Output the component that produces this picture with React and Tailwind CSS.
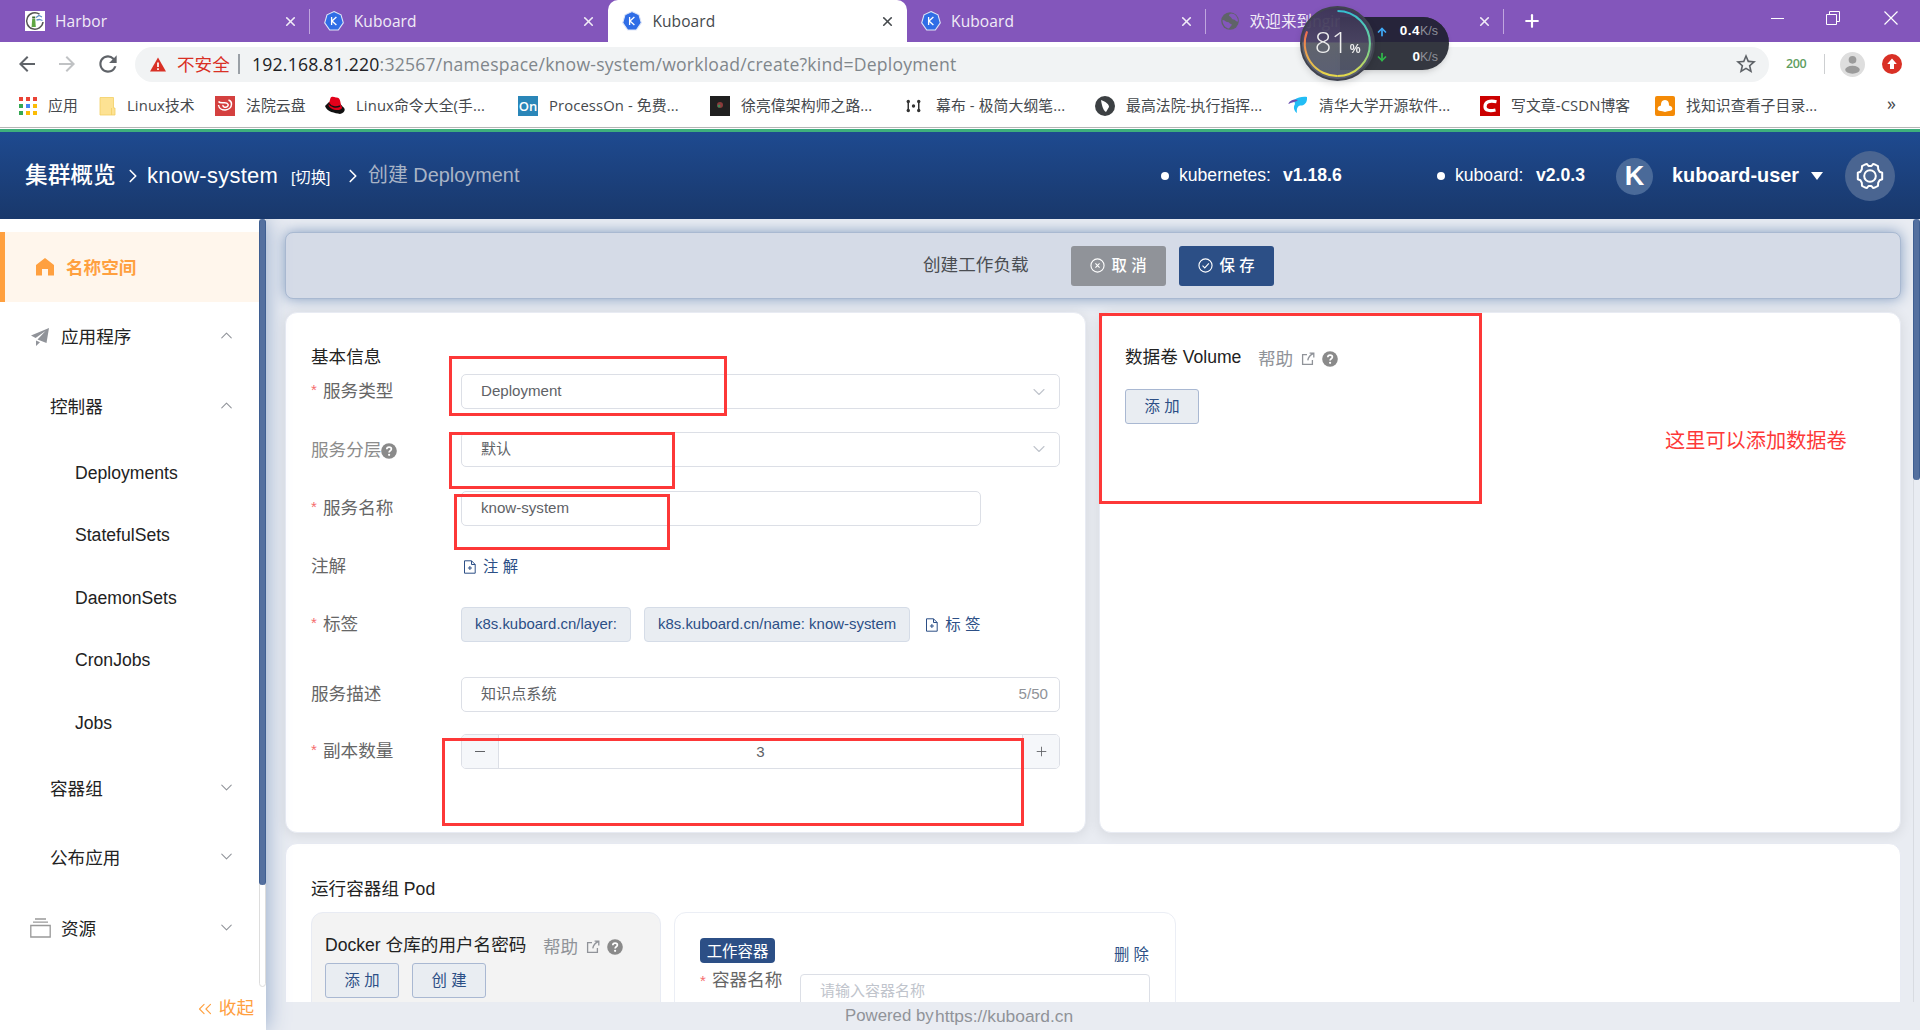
import { X, Plus, ChevronDown, ChevronUp, ChevronRight, ChevronsLeft, ArrowUp, ArrowDown } from 'lucide-react';
import { MdArrowBack, MdArrowForward, MdRefresh, MdStarBorder } from 'react-icons/md';

/* ---------- icons ---------- */

function KuboardIcon() {
    return (
        <svg viewBox="0 0 20 20" className="w-5 h-5 shrink-0">
            <path d="M10 .6 17 3.800 19.300 11.800 14.300 19H5.700L.7 11.800 3 3.800Z" fill="#2f6de6" stroke="#dfe6f7" strokeWidth="1.100" />
            <path d="M7.600 6v8M12.400 6 8 10l4.400 4" fill="none" stroke="#fff" strokeWidth="1.300" />
        </svg>
    );
}

function HarborIcon() {
    return (
        <svg viewBox="0 0 20 20" className="w-5 h-5 shrink-0">
            <rect width="20" height="20" fill="#fff" />
            <path d="M14.500 3.200A8.200 8.200 0 1 0 18 11" fill="none" stroke="#555" strokeWidth="1.500" />
            <path d="M7.200 8h3l.6 8H6.600Z" fill="#5fa743" />
            <path d="M7.200 5.500h3v2h-3Z" fill="#3d6b2e" />
            <path d="M11 6.500l3-2 3 1.500M11.500 9l3-.5 3 1" fill="none" stroke="#5d8fc4" strokeWidth="1.300" />
        </svg>
    );
}

function GlobeIcon() {
    return (
        <svg viewBox="0 0 20 20" className="w-5 h-5 shrink-0">
            <circle cx="10" cy="10" r="8.800" fill="#5f6368" />
            <path d="M2.500 9c2.500 0 3 2 5 2s1.500 1.500 3.500 2-.5 2.500-2 4.500C5 17 2.500 13 2.500 9ZM11 2.500c-2 1-3 2-1 3s1.500 3 3.500 3 2 2.500 4.500 2C18 6 15 2.500 11 2.500Z" fill="#8356bb" />
        </svg>
    );
}

function HelpIcon() {
    return (
        <svg viewBox="0 0 16 16" className="w-4 h-4 shrink-0">
            <circle cx="8" cy="8" r="7.800" fill="#8a8a8a" />
            <path d="M5.800 6.300c0-3 4.600-2.800 4.600-.2 0 1.600-2.300 1.700-2.300 3.300" fill="none" stroke="#fff" strokeWidth="1.700" />
            <circle cx="8.100" cy="11.800" r="1.100" fill="#fff" />
        </svg>
    );
}

function ExternalIcon() {
    return (
        <svg viewBox="0 0 14 14" className="w-3.5 h-3.5 shrink-0" fill="none" stroke="#909399" strokeWidth="1.300">
            <path d="M6 2.600H1.600v9.800h9.800V8M8.600 1.200h4.200v4.200M12.600 1.400C9 3 7.300 5 6.800 8.300" />
        </svg>
    );
}

function DocAddIcon() {
    return (
        <svg viewBox="0 0 14 14" className="w-3.5 h-3.5 shrink-0" fill="none" stroke="#2c4f86" strokeWidth="1">
            <path d="M1.500.8h7l3.700 3.700v8.700H1.500ZM8.500.8v3.700h3.700M6.900 6v4M4.900 8h4" />
        </svg>
    );
}

function GearIcon() {
    return (
        <svg viewBox="0 0 28 28" className="w-7 h-7" fill="none" stroke="#fff" strokeWidth="2" strokeLinejoin="round">
            <path d="M9 2.500 11 2l1.500 2h3L17 2l2 .5 3 1.700.2 3 1.400 2.500 2.600 1v6.600l-2.600 1-1.400 2.500-.2 3-3 1.700-2 .5-1.500-2h-3L11 26l-2-.5-3-1.700-.2-3-1.400-2.500-2.600-1v-6.600l2.600-1 1.400-2.500.2-3Z" />
            <circle cx="14" cy="14" r="5.800" />
        </svg>
    );
}

/* ---------- browser chrome ---------- */

const tabs = [
    { title: 'Harbor', icon: <HarborIcon />, divider: true },
    { title: 'Kuboard', icon: <KuboardIcon /> },
    { title: 'Kuboard', icon: <KuboardIcon />, active: true },
    { title: 'Kuboard', icon: <KuboardIcon />, divider: true },
    { title: '欢迎来到nginx!', icon: <GlobeIcon />, divider: true },
];

function TabBar() {
    return (
        <div className="flex h-[42px] bg-[#8356bb] pl-[11px]">
            {tabs.map((tab, i) => (
                <div
                    key={i}
                    className={`relative flex items-center w-[298.700px] pl-[14px] pr-3 text-[15.500px] ${tab.active ? 'bg-white text-[#45494d] rounded-t-[10px]' : 'text-[#f1ecf7]'}`}
                >
                    {tab.icon}
                    <span className="ml-2.5 mt-0.5 flex-1 tracking-[0.100px]">{tab.title}</span>
                    <X className="w-[15px] h-[15px]" strokeWidth={2.600} />
                    {tab.divider && <div className="absolute right-0 top-[9px] w-px h-[25px] bg-[#c0a6de]"></div>}
                </div>
            ))}
            <div className="flex items-center pl-[18px] text-white"><Plus className="w-5 h-5" strokeWidth={2.600} /></div>
            <div className="ml-auto flex items-center gap-[42px] pr-[22px] pb-1.5 text-white">
                <div className="w-[13px] h-px bg-white"></div>
                <svg viewBox="0 0 14 14" className="mr-0.5 w-3.5 h-3.5" fill="none" stroke="#fff"><path d="M.5 3.500h10v10H.5ZM3.500 3.500v-3h10v10h-3" /></svg>
                <svg viewBox="0 0 14 14" className="w-3.5 h-3.5" fill="none" stroke="#fff" strokeWidth="1.200"><path d="M.5.5l13 13M13.500.5l-13 13" /></svg>
            </div>
        </div>
    );
}

function AddressBar() {
    return (
        <div className="flex items-center h-[44px] pl-[15px] text-[#5f6368]">
            <MdArrowBack className="w-6 h-6" />
            <MdArrowForward className="ml-4 w-6 h-6 text-[#c0c2c4]" />
            <MdRefresh className="ml-4 w-[26px] h-[26px]" />
            <div className="ml-[14px] flex items-center w-[1634px] h-[35px] rounded-full bg-[#f1f3f4] pl-[15px] pr-[11px] text-[17.600px]">
                <svg viewBox="0 0 16 15" className="w-4 h-[15px]">
                    <path d="M8 .5 16 14.500H0Z" fill="#d93025" />
                    <path d="M8 5.500v4.500M8 11.200v1.800" stroke="#fff" strokeWidth="1.700" />
                </svg>
                <span className="ml-[11px] w-[54px] whitespace-nowrap text-[#d93025]">不安全</span>
                <div className="ml-[7px] w-0.5 h-5 bg-[#9aa0a6]"></div>
                <span className="ml-3 tracking-[0.220px] text-[#80868b]"><span className="text-[#202124]">192.168.81.220</span>:32567/namespace/know-system/workload/create?kind=Deployment</span>
                <MdStarBorder className="ml-auto w-6 h-6" />
            </div>
            <span className="ml-[17px] w-[22px] text-[12.500px] font-semibold tracking-[-0.400px] text-[#5f9e5f]">200</span>
            <div className="ml-4 w-px h-5 bg-[#cdcfd1]"></div>
            <svg viewBox="0 0 24 24" className="ml-[15px] w-[25px] h-[25px]">
                <circle cx="12" cy="12" r="12" fill="#dedede" />
                <circle cx="12" cy="7.500" r="3.700" fill="#9b9b9b" />
                <ellipse cx="12" cy="17" rx="7" ry="3.800" fill="#9b9b9b" />
            </svg>
            <svg viewBox="0 0 20 20" className="ml-[17px] w-5 h-5">
                <circle cx="10" cy="10" r="10" fill="#d93025" />
                <path d="M10 4.500 14.800 10H12v5H8v-5H5.200Z" fill="#fff" />
            </svg>
        </div>
    );
}

const appColors = ['bg-[#ea4335]', 'bg-[#ea4335]', 'bg-[#ea4335]', 'bg-[#34a853]', 'bg-[#4285f4]', 'bg-[#fbbc05]', 'bg-[#34a853]', 'bg-[#fbbc05]', 'bg-[#fbbc05]'];

const bookmarks = [
    { title: 'Linux技术', width: 'w-[116px]', gap: 'ml-[8px]', icon: <path d="M1 1.500h13.500v10.500h1.500v7H1ZM12.500 12v7" fill="#fde293" stroke="#f3cf63" strokeWidth=".8" /> },
    {
        title: '法院云盘', width: 'w-[110px]', icon: (
            <>
                <rect width="20" height="20" fill="#d4403f" />
                <path d="M3.500 5.500c1 1.500 3 1.500 5 1.300 5-.5 6 3 3 4.200-2 .7-4-.5-3.500-2M3.500 9c1 7 13 6.500 13-1 0-2-1.500-3.500-3-4" fill="none" stroke="#fff" strokeWidth="1.500" />
            </>
        ),
    },
    {
        title: 'Linux命令大全(手...', width: 'w-[193px]', icon: (
            <>
                <path d="M0 10c2 6 10 7 15 8 5-1 6-5 3-7L13 5 4 6Z" fill="#111" />
                <path d="M3.500 9l2-7c2-2.500 4 0 6-.5 4 0 4 5 4.500 8 2 2 1 4-2 4.500C9 14.500 4 12 3.500 9Z" fill="#e2001a" />
                <path d="M4 7.500c2 3.500 7 4.500 11 2.500" fill="none" stroke="#111" strokeWidth="1.500" />
            </>
        ),
    },
    {
        title: 'ProcessOn - 免费...', width: 'w-[192px]', icon: (
            <>
                <rect width="20" height="20" fill="#2a86b8" />
                <text x="10" y="15" textAnchor="middle" fontSize="13" fontWeight="600" fill="#fff">On</text>
            </>
        ),
    },
    {
        title: '徐亮偉架构师之路...', width: 'w-[195px]', icon: (
            <>
                <rect width="20" height="20" fill="#202020" />
                <circle cx="10" cy="9" r="3" fill="#8a3a3a" />
                <circle cx="9" cy="10" r="1.500" fill="#3a8a5a" />
            </>
        ),
    },
    {
        title: '幕布 - 极简大纲笔...', width: 'w-[190px]', icon: (
            <g fill="#333">
                <path d="M2.500 5h1.500v10H2.500ZM13 5h1.500v10H13Z" />
                <circle cx="3.300" cy="5.500" r="1.700" /><circle cx="3.300" cy="14.500" r="1.700" />
                <circle cx="13.700" cy="5.500" r="1.700" /><circle cx="13.700" cy="14.500" r="1.700" /><circle cx="8.500" cy="10" r="1.700" />
            </g>
        ),
    },
    {
        title: '最高法院-执行指挥...', width: 'w-[193px]', icon: (
            <>
                <circle cx="10" cy="10" r="10" fill="#3c4043" />
                <path d="M6 4c5 2 8 4 8 7l-3 5c-3-2-4-6-5-12Z" fill="#fff" />
            </>
        ),
    },
    {
        title: '清华大学开源软件...', width: 'w-[192px]', icon: (
            <>
                <path d="M6 4c4-3 9-3.500 13-3 .5 6-3 9-7 8.500-3 1-3.500 4-3 7.500-3-2-4-6-2-9Z" fill="#22bdf5" />
                <path d="M0 8c3-5 7-5 10-4-2 2-5 2-10 4Z" fill="#6a4fb0" />
            </>
        ),
    },
    {
        title: '写文章-CSDN博客', width: 'w-[175px]', icon: (
            <>
                <rect width="20" height="20" fill="#c00" />
                <path d="M16.500 5.700c-7-1.500-11.500 0-11.500 5 0 4 5 4.500 10.500 3.300" fill="none" stroke="#fff" strokeWidth="3.200" />
            </>
        ),
    },
    {
        title: '找知识查看子目录...', width: 'w-[220px]', icon: (
            <>
                <rect width="20" height="20" rx="2" fill="#f48a06" />
                <path d="M10 4c4 0 4 4 4 5.500 4 .5 5 5.500 0 5.500-2 0-3 1-4 1s-2-1-4-1c-5 0-4-5 0-5.500C6 8 6 4 10 4Z" fill="#fff" />
            </>
        ),
    },
];

function BookmarkBar() {
    return (
        <div className="flex items-center h-[41px] pl-[19px] pb-0.5 text-[14.800px] tracking-[0.120px] text-[#45494d]">
            <div className="flex items-center w-20">
                <div className="grid grid-cols-3 gap-[3px]">
                    {appColors.map((color, i) => <div key={i} className={`w-1 h-1 ${color}`}></div>)}
                </div>
                <span className="ml-[11px]">应用</span>
            </div>
            {bookmarks.map((mark) => (
                <div key={mark.title} className={`flex items-center shrink-0 whitespace-nowrap ${mark.width}`}>
                    <svg viewBox="0 0 20 20" className="w-5 h-5 shrink-0">{mark.icon}</svg>
                    <span className={mark.gap || 'ml-[11px]'}>{mark.title}</span>
                </div>
            ))}
            <span className="ml-auto mr-6 mb-1.5 text-lg leading-none">»</span>
        </div>
    );
}

// Floating memory / network widget that sits over the tab strip
function SpeedMonitor() {
    return (
        <div className="absolute left-[1300px] top-1.5 w-[149px] h-[75px]">
            <div className="absolute left-10 top-[11px] w-[109px] h-[53px] rounded-r-full overflow-hidden bg-[#343740] shadow-md text-[13.500px] font-semibold text-white">
                <div className="flex items-center h-[25px] bg-[#26243a] pl-[36px] pr-[11px] pt-1">
                    <ArrowUp className="w-3 h-3 text-[#3fa9f5]" strokeWidth={3.500} />
                    <span className="ml-auto tracking-[0.500px]">0.4<span className="text-[12.500px] font-normal tracking-normal text-[#8d8f99]">K/s</span></span>
                </div>
                <div className="flex items-center h-7 pl-[36px] pr-[11px] pt-0.5">
                    <ArrowDown className="w-3 h-3 text-[#2fb84a]" strokeWidth={3.500} />
                    <span className="ml-auto">0<span className="text-[12.500px] font-normal text-[#8d8f99]">K/s</span></span>
                </div>
            </div>
            <svg viewBox="0 0 74 74" className="absolute left-0 top-0 w-[75px] h-[75px] drop-shadow-md">
                <defs>
                    <linearGradient id="ring" x1="0" y1="0" x2="0" y2="1">
                        <stop offset="0" stopColor="#35bfd0" />
                        <stop offset=".6" stopColor="#7bd48c" />
                        <stop offset="1" stopColor="#e6d94a" />
                    </linearGradient>
                    <linearGradient id="ringLeft" x1="0" y1="0" x2="0" y2="1">
                        <stop offset="0" stopColor="#ee6a50" />
                        <stop offset="1" stopColor="#e6d94a" />
                    </linearGradient>
                    <linearGradient id="disc" x1="0" y1="0" x2="0" y2="1">
                        <stop offset="0" stopColor="#3a3352" />
                        <stop offset=".48" stopColor="#4b4564" />
                        <stop offset=".5" stopColor="#565a64" />
                        <stop offset="1" stopColor="#50556c" />
                    </linearGradient>
                </defs>
                <circle cx="37" cy="37" r="36" fill="url(#disc)" fillOpacity=".93" stroke="#40434f" strokeWidth="2" />
                <path d="M37 5a32 32 0 0 1 0 64" fill="none" stroke="url(#ring)" strokeWidth="2" />
                <path d="M37 69A32 32 0 0 1 7 25" fill="none" stroke="url(#ringLeft)" strokeWidth="2" />
                <text x="31" y="46" textAnchor="middle" fontSize="29" fontWeight="300" fill="#eee" className="font-['Open_Sans']">81</text>
                <text x="54.500" y="46.500" textAnchor="middle" fontSize="12" fontWeight="600" fill="#eee">%</text>
            </svg>
        </div>
    );
}

/* ---------- kuboard header ---------- */

function Header() {
    return (
        <div className="relative z-20 flex items-center h-[87px] pl-[25px] pr-[25px] bg-gradient-to-b from-[#1e4a90] to-[#19386b] text-white whitespace-nowrap">
            <span className="w-[91px] text-[22.700px] font-medium">集群概览</span>
            <ChevronRight className="ml-1.5 w-[22px] h-[22px]" strokeWidth={1.800} />
            <span className="ml-[3px] w-[132px] text-[22px] tracking-[0.250px] font-medium">know-system</span>
            <span className="ml-3 mt-1 w-[39px] text-[15.400px]">[切换]</span>
            <ChevronRight className="ml-3 w-[22px] h-[22px]" strokeWidth={1.800} />
            <span className="ml-1 text-[19.900px] text-[#a9b4c6]">创建 Deployment</span>
            <div className="ml-auto flex items-center text-[17.600px]">
                <div className="w-2 h-2 rounded-full bg-white"></div>
                <span className="ml-2.5 w-[104px]">kubernetes:</span>
                <span className="w-[154px] font-bold">v1.18.6</span>
                <div className="w-2 h-2 rounded-full bg-white"></div>
                <span className="ml-2.5 w-[81px]">kuboard:</span>
                <span className="w-[80px] font-bold">v2.0.3</span>
                <div className="mt-px flex items-center justify-center w-[37px] h-[37px] rounded-full bg-[#4a6a99] text-[27px] font-bold">K</div>
                <span className="ml-[19px] w-[139px] text-[19.900px] font-bold">kuboard-user</span>
                <div className="border-x-[6px] border-t-[8px] border-x-transparent border-t-white"></div>
                <div className="ml-[22px] flex items-center justify-center w-[50px] h-[50px] rounded-full bg-[#4a6591]"><GearIcon /></div>
            </div>
        </div>
    );
}

/* ---------- side menu ---------- */

function MenuGroup({ title, icon, indent, height, open }) {
    const Chevron = open ? ChevronUp : ChevronDown;
    return (
        <div className={`flex items-center pr-[23px] ${indent} ${height}`}>
            {icon}
            <span className="pt-0.5">{title}</span>
            <Chevron className="ml-auto mb-0.5 w-[19px] h-[19px] text-[#909399]" strokeWidth={1.300} />
        </div>
    );
}

function Sidebar() {
    return (
        <div className="flex flex-col w-[266px] shrink-0 bg-white text-[17.600px] text-[#222] z-10 shadow-[0_0_22px_#8fa6c8]">
            <div className="flex h-[768px]">
                <div className="w-[259px] pt-[13px]">
                    <div className="flex items-center h-[70px] pl-[31px] border-l-[5px] border-[#ffa03f] bg-[#fff6ec] text-[#ffa03f] font-bold">
                        <svg viewBox="0 0 18 18" className="w-[18px] h-[18px]"><path d="M9 0 18 7v10.500h-6V11H6v6.500H0V7Z" fill="#ffa03f" /></svg>
                        <span className="ml-3 pt-0.5">名称空间</span>
                    </div>
                    <MenuGroup
                        title="应用程序"
                        indent="pl-[31px]"
                        height="h-[69px]"
                        open
                        icon={<svg viewBox="0 0 18 18" className="mr-3 w-[18px] h-[18px]"><path d="M18 0 0 7.500l4.600 2.500L14.500 3 6.500 11.500 15.500 15ZM5 12.500V18l4-3.700Z" fill="#909399" /></svg>}
                    />
                    <MenuGroup title="控制器" indent="pl-[50px]" height="h-[70px]" open />
                    {['Deployments', 'StatefulSets', 'DaemonSets', 'CronJobs', 'Jobs'].map((name) => (
                        <div key={name} className="flex items-center h-[62.500px] pl-[75px] pt-px">{name}</div>
                    ))}
                    <MenuGroup title="容器组" indent="pl-[50px]" height="h-[69px]" />
                    <MenuGroup title="公布应用" indent="pl-[50px]" height="h-[70px]" />
                    <MenuGroup
                        title="资源"
                        indent="pl-[30px]"
                        height="h-[71px]"
                        icon={<svg viewBox="0 0 21 20" className="mr-2.5 w-[21px] h-5" fill="none" stroke="#999" strokeWidth="1.300"><path d="M5 1h11M3 4.200h15M.8 7.500h19.400v11.500H.8Z" /></svg>}
                    />
                </div>
                <div className="w-[7px] rounded-b border border-[#ddd]">
                    <div className="-m-px w-[7px] h-[666px] rounded bg-[#54709f] border-x border-[#3f5f92]"></div>
                </div>
            </div>
            <div className="flex items-center justify-end h-[43px] pr-3 text-[#ffa03f]">
                <ChevronsLeft className="w-[22px] h-[22px]" strokeWidth={1.200} />
                <span className="ml-[3px]">收起</span>
            </div>
        </div>
    );
}

/* ---------- form ---------- */

function Field({ label, required, muted, height, children }) {
    return (
        <div className={`flex ${height}`}>
            <div className={`flex items-center w-[150px] h-[35px] shrink-0 ${muted ? 'pt-0.5 text-[#8c8c8c]' : 'text-[#666]'}`}>
                {required && <span className="w-3 h-6 text-[15px] leading-5 text-[#f56c6c]">*</span>}
                {label}
            </div>
            {children}
        </div>
    );
}

function TextBox({ value, width = 'w-[599px]', children }) {
    return (
        <div className={`flex items-center justify-between h-[35px] pl-[19px] rounded-[5px] border border-[#dcdfe6] bg-white text-[15.100px] text-[#606266] ${width}`}>
            {value}
            {children}
        </div>
    );
}

function Button({ children }) {
    return <button className="w-[74px] h-[35px] rounded-[3px] border border-[#a9b8d2] bg-[#e9edf2] text-[15.400px] text-[#2c4f86]">{children}</button>;
}

function AddLink({ children }) {
    return <div className="flex items-center gap-1.5 h-[35px] pl-0.5 text-[15.400px] text-[#2c4f86]"><DocAddIcon />{children}</div>;
}

function HelpLinks() {
    return (
        <div className="flex items-center mt-[3px] text-[#909399]">
            <span className="w-[43px]">帮助</span>
            <ExternalIcon />
            <div className="ml-[7px]"><HelpIcon /></div>
        </div>
    );
}

function Tag({ children }) {
    return <div className="flex items-center h-[35px] mr-[13px] px-[13px] pb-px rounded border border-[#d5dce7] bg-[#e9edf2] text-[14.950px] text-[#2c4f86] whitespace-nowrap">{children}</div>;
}

function BasicInfo() {
    return (
        <div className="w-[801px] h-[521px] rounded-xl border border-[#e8ebf3] bg-white pl-[25px] pt-[30px] shadow-[0_2px_13px_rgba(0,0,0,0.09)]">
            <div className="h-[31px] leading-[29px] text-[#222]">基本信息</div>
            <Field label="服务类型" required height="h-[58px]">
                <TextBox value="Deployment"><ChevronDown className="mr-2.5 w-5 h-5 text-[#c0c4cc]" strokeWidth={1.300} /></TextBox>
            </Field>
            <Field label={<>服务分层<HelpIcon /></>} muted height="h-[59px]">
                <TextBox value="默认"><ChevronDown className="mr-2.5 mb-0.5 w-5 h-5 text-[#c0c4cc]" strokeWidth={1.300} /></TextBox>
            </Field>
            <Field label="服务名称" required height="h-[58px]">
                <TextBox value="know-system" width="w-[520px]" />
            </Field>
            <Field label="注解" height="h-[58px]">
                <AddLink>注 解</AddLink>
            </Field>
            <Field label="标签" required height="h-[70px]">
                <Tag>k8s.kuboard.cn/layer:</Tag>
                <Tag>k8s.kuboard.cn/name: know-system</Tag>
                <AddLink>标 签</AddLink>
            </Field>
            <Field label="服务描述" height="h-[57px]">
                <TextBox value="知识点系统"><span className="mr-[11px] text-[#909399]">5/50</span></TextBox>
            </Field>
            <Field label="副本数量" required height="h-[35px]">
                <div className="flex w-[599px] h-[35px] rounded-[5px] border border-[#dcdfe6] overflow-hidden text-[15.100px] text-[#606266]">
                    <div className="flex items-center justify-center w-[37px] border-r border-[#dcdfe6] bg-[#f5f7fa]"><div className="w-2.5 h-px bg-[#606266]"></div></div>
                    <div className="flex-1 text-center leading-[33px]">3</div>
                    <div className="flex items-center justify-center w-[37px] border-l border-[#dcdfe6] bg-[#f5f7fa]"><Plus className="w-[15px] h-[15px]" strokeWidth={1.400} /></div>
                </div>
            </Field>
        </div>
    );
}

function Volumes() {
    return (
        <div className="w-[802px] h-[521px] rounded-xl border border-[#e8ebf3] bg-white pl-[25px] pt-[31px] shadow-[0_2px_13px_rgba(0,0,0,0.09)]">
            <div className="flex items-center h-[27px] mb-[18px]">
                <span className="w-[133px] text-[#222]">数据卷 Volume</span>
                <HelpLinks />
            </div>
            <Button>添 加</Button>
        </div>
    );
}

function PodSection() {
    return (
        <div className="mt-2.5 w-[1616px] h-[300px] rounded-xl border border-[#e8ebf3] bg-white pl-[25px] pt-[30px]">
            <div className="h-[38px] leading-[30px] text-[#222]">运行容器组 Pod</div>
            <div className="flex gap-[13px]">
                <div className="w-[350px] h-[200px] rounded-xl border border-[#e8ebf3] bg-[#f3f3f3] pl-[13px] pt-[19px]">
                    <div className="flex items-center h-[27px] mb-1 whitespace-nowrap">
                        <span className="w-[218px] text-[#222]">Docker 仓库的用户名密码</span>
                        <HelpLinks />
                    </div>
                    <div className="flex gap-[13px]">
                        <Button>添 加</Button>
                        <Button>创 建</Button>
                    </div>
                </div>
                <div className="w-[502px] h-[200px] rounded-xl border border-[#ebeef5] bg-white px-[25px] pt-[25px]">
                    <div className="flex justify-between h-[29px]">
                        <div className="w-[75px] h-[25px] rounded bg-[#2c4f86] text-center text-[15.400px] leading-[27px] text-white">工作容器</div>
                        <span className="pt-[5px] pr-px text-[15.400px] text-[#2c4f86]">删 除</span>
                    </div>
                    <div className="flex text-[#666]">
                        <span className="w-3 pt-1 text-[15px] leading-5 text-[#f56c6c]">*</span>
                        <span className="w-[88px]">容器名称</span>
                        <div className="mt-[7px] w-[350px] h-[35px] rounded border border-[#dcdfe6] pl-[19px] leading-[32px] text-[15px] text-[#c0c4cc]">请输入容器名称</div>
                    </div>
                </div>
            </div>
        </div>
    );
}

function Toolbar() {
    return (
        <div className="flex items-center w-[1616px] h-[67px] mb-[13px] pl-[637px] rounded-lg border border-[#a9b9d1] bg-[#d5dbe7] shadow-[0_0_14px_#839cc0]">
            <span className="w-[148px] text-[#4a4d52]">创建工作负载</span>
            <button className="flex items-center justify-center gap-1.5 w-[95px] h-10 rounded-[3px] bg-[#909399] text-[15.400px] font-medium text-white">
                <svg viewBox="0 0 16 16" className="w-[15px] h-[15px]" fill="none" stroke="#fff" strokeWidth="1.200"><circle cx="8" cy="8" r="7" /><path d="M5.800 5.800l4.400 4.400M10.200 5.800l-4.400 4.400" /></svg>
                取 消
            </button>
            <button className="ml-[13px] flex items-center justify-center gap-1.5 w-[95px] h-10 rounded-[3px] bg-[#2c4f86] text-[15.400px] font-medium text-white">
                <svg viewBox="0 0 16 16" className="w-[15px] h-[15px]" fill="none" stroke="#fff" strokeWidth="1.200"><circle cx="8" cy="8" r="7" /><path d="M4.800 8.200l2.400 2.400 4.400-4.800" /></svg>
                保 存
            </button>
        </div>
    );
}

// Hand drawn marks over the form
function Annotations() {
    return (
        <>
            <div className="absolute left-[449px] top-[356px] w-[278px] h-[60px] border-3 border-[#fd3838]"></div>
            <div className="absolute left-[449px] top-[432px] w-[226px] h-[57px] border-3 border-[#fd3838]"></div>
            <div className="absolute left-[454px] top-[494px] w-[216px] h-[56px] border-3 border-[#fd3838]"></div>
            <div className="absolute left-[442px] top-[738px] w-[582px] h-[88px] border-3 border-[#fd3838]"></div>
            <div className="absolute left-[1099px] top-[313px] w-[383px] h-[191px] border-3 border-[#fd3838]"></div>
            <div className="absolute left-[1665px] top-[426px] text-[20.200px] leading-[30px] whitespace-nowrap text-[#fd3838]">这里可以添加数据卷</div>
        </>
    );
}

export default function App() {
    return (
        <div className="relative w-[1920px] h-[1030px] overflow-hidden bg-white font-['Liberation_Sans','Noto_Sans_CJK_SC',sans-serif]">
            <div className="h-[132px] border-b-3 border-[#3eaf7c] font-['Open_Sans','Noto_Sans_CJK_SC',sans-serif]">
                <TabBar />
                <AddressBar />
                <BookmarkBar />
                <div className="h-px bg-[#b6b6b6]"></div>
            </div>
            <Header />
            <div className="flex h-[811px]">
                <Sidebar />
                <div className="flex flex-col flex-1 bg-[#e9ecf2]">
                    <div className="flex h-[783px] overflow-hidden text-[17.600px]">
                        <div className="flex-1 pl-[19px] pt-[13px]">
                            <Toolbar />
                            <div className="flex gap-[13px]">
                                <BasicInfo />
                                <Volumes />
                            </div>
                            <PodSection />
                        </div>
                        <div className="w-[7px] border-l border-[#d8dbe1]">
                            <div className="-ml-px w-[7px] h-[261px] rounded bg-[#54709f] border-x border-[#3f5f92]"></div>
                        </div>
                    </div>
                    <div className="flex h-7 pl-[579px] leading-[27px] text-[#909399]">
                        <span className="w-[90px] text-[16.800px]">Powered by</span>
                        <span className="pt-px text-[17.400px]">https://kuboard.cn</span>
                    </div>
                </div>
            </div>
            <SpeedMonitor />
            <Annotations />
        </div>
    );
}
